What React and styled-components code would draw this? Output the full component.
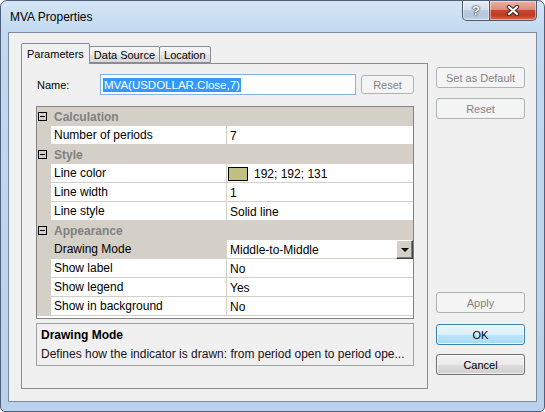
import React from 'react'
import styled, { createGlobalStyle } from 'styled-components'

const GlobalStyle = createGlobalStyle`
    html, body {
        margin: 0;
        padding: 0;
        background: #ffffff;
    }
    body {
        font-family: "Liberation Sans", Arial, sans-serif;
        color: #000;
    }
`;

const Window = styled.div`
    width: 545px;
    height: 412px;
    box-sizing: border-box;
    border: 1px solid #50607a;
    border-radius: 7px 7px 5px 5px;
    background: linear-gradient(180deg, #d4e5f6 0%, #c2d9f0 32px, #b9d1ea 100%);
    display: flex;
    flex-direction: column;
    overflow: hidden;
`;

const TitleBar = styled.div`
    height: 31px;
    flex-shrink: 0;
    display: flex;
    justify-content: space-between;
    align-items: flex-start;
    padding: 0 7px 0 9px;

    h1 {
        margin: 0;
        padding-top: 9px;
        font-size: 12px;
        line-height: 15px;
        font-weight: normal;
        color: #000;
    }
`;

const CaptionButtons = styled.div`
    display: flex;
    height: 20px;
`;

const CaptionButton = styled.div`
    box-sizing: border-box;
    width: ${p => p.$close ? 47 : 28}px;
    height: 20px;
    display: flex;
    align-items: center;
    justify-content: center;
    border: 1px solid #4c5b70;
    border-top: none;
    border-left: ${p => p.$close ? 'none' : '1px solid #4c5b70'};
    border-radius: ${p => p.$close ? '0 0 5px 0' : '0 0 0 5px'};
    background: ${p => p.$close
        ? 'linear-gradient(180deg, #eab2a4 0%, #dc8c7a 45%, #c8452c 50%, #c23a22 75%, #dc6a4c 100%)'
        : 'linear-gradient(180deg, #e6edf5 0%, #d3dfec 45%, #bccddf 50%, #b4c6da 80%, #c8d8ea 100%)'};
    box-shadow: inset 0 0 0 1px rgba(255, 255, 255, 0.45);
    color: #fff;
    font-weight: bold;
    font-size: 13px;
    text-shadow: 0 0 1px #2f3a48, 0 0 1px #2f3a48, 0 0 2px #2f3a48;
`;

const Client = styled.div`
    flex: 1;
    margin: 0 7px 9px 7px;
    border: 1px solid #7b8b9e;
    background: #f0f0f0;
    display: flex;
    padding: 10px 11px 12px 12px;
`;

const LeftPane = styled.div`
    width: 407px;
    display: flex;
    flex-direction: column;
`;

const TabStrip = styled.div`
    height: 20px;
    display: flex;
    align-items: flex-end;
    position: relative;
    z-index: 1;
`;

const Tab = styled.div`
    box-sizing: border-box;
    height: ${p => p.$active ? 21 : 17}px;
    margin-bottom: ${p => p.$active ? -1 : 0}px;
    margin-left: ${p => p.$first ? 0 : -1}px;
    padding: 0 ${p => p.$active ? 5 : 4}px;
    border: 1px solid #898c95;
    border-bottom: ${p => p.$active ? 'none' : '1px solid #898c95'};
    border-radius: 2px 2px 0 0;
    background: ${p => p.$active
        ? '#f0f0f0'
        : 'linear-gradient(180deg, #f6f6f6 0%, #ececec 50%, #e2e2e2 51%, #dadada 100%)'};
    font-size: 11px;
    line-height: ${p => p.$active ? 20 : 16}px;
    white-space: nowrap;
    position: relative;
    z-index: ${p => p.$active ? 2 : 1};
`;

const Panel = styled.div`
    flex: 1;
    border: 1px solid #898c95;
    background: #f0f0f0;
    padding: 10px 13px 0 14px;
    display: flex;
    flex-direction: column;
`;

const NameRow = styled.div`
    height: 21px;
    display: flex;
    align-items: center;

    label {
        width: 64px;
        font-size: 11px;
        padding-left: 1px;
        box-sizing: border-box;
    }
`;

const NameInput = styled.div`
    box-sizing: border-box;
    width: 256px;
    height: 21px;
    border: 1px solid #7eb4ea;
    background: #fff;
    display: flex;
    align-items: center;
    padding-left: 2px;
    margin-right: 5px;

    span {
        background: #3399ff;
        color: #fff;
        font-size: 11.5px;
        line-height: 14px;
        padding: 0 1px;
    }
`;

const Button = styled.button`
    box-sizing: border-box;
    width: ${p => p.$width || 89}px;
    height: ${p => p.$height || 21}px;
    margin: 0;
    margin-top: ${p => p.$top || 0}px;
    padding: 0;
    font-family: "Liberation Sans", Arial, sans-serif;
    font-size: 11px;
    border-radius: 3px;
    border: 1px solid ${p => p.disabled ? '#adb2b5' : p.$default ? '#3c7fb1' : '#707070'};
    color: ${p => p.disabled ? '#838383' : '#000'};
    background: ${p => p.disabled
        ? '#f4f4f4'
        : p.$default
            ? 'linear-gradient(180deg, #eaf6fd 0%, #d9f0fc 50%, #bee6fd 51%, #a7d9f5 100%)'
            : 'linear-gradient(180deg, #f2f2f2 0%, #ebebeb 50%, #dddddd 51%, #cfcfcf 100%)'};
    box-shadow: ${p => p.disabled ? 'none' : 'inset 0 0 0 1px rgba(255, 255, 255, 0.7)'};
`;

const Grid = styled.div`
    box-sizing: border-box;
    width: 378px;
    height: 213px;
    margin-top: 11px;
    border: 1px solid #828282;
    background: #fff;
    overflow: hidden;
    font-size: 12px;
`;

const CategoryRow = styled.div`
    height: 19px;
    display: flex;
    align-items: center;
    background: #d4d0c8;

    strong {
        padding-left: 3px;
        color: #808080;
        font-weight: bold;
    }
`;

const ExpandCell = styled.div`
    width: 14px;
    height: 19px;
    display: flex;
    align-items: center;
    padding-left: 1px;
    box-sizing: border-box;
`;

const MinusBox = styled.span`
    box-sizing: border-box;
    width: 9px;
    height: 9px;
    border: 1px solid #000;
    position: relative;

    &::after {
        content: '';
        position: absolute;
        left: 1px;
        right: 1px;
        top: 3px;
        height: 1px;
        background: #000;
    }
`;

const PropRow = styled.div`
    height: 19px;
    display: flex;
`;

const Gutter = styled.div`
    width: 14px;
    background: #d4d0c8;
`;

const NameCell = styled.div`
    box-sizing: border-box;
    width: 176px;
    height: 19px;
    padding-left: 3px;
    line-height: 19px;
    border-right: 1px solid #d4d0c8;
    border-bottom: 1px solid #d4d0c8;
    background: ${p => p.$selected ? '#d4d0c8' : '#fff'};
    white-space: nowrap;
`;

const ValueCell = styled.div`
    box-sizing: border-box;
    flex: 1;
    height: 19px;
    padding-left: 3px;
    padding-top: 1px;
    border-bottom: 1px solid #d4d0c8;
    display: flex;
    align-items: center;
    white-space: nowrap;
`;

const Swatch = styled.span`
    box-sizing: border-box;
    width: 20px;
    height: 14px;
    margin: 0 6px 0 -2px;
    border: 1px solid #000;
    background: ${p => p.$color};
`;

const DropButton = styled.span`
    box-sizing: border-box;
    width: 17px;
    height: 19px;
    margin-left: auto;
    margin-top: -1px;
    align-self: flex-start;
    background: #d4d0c8;
    border: 1px solid;
    border-color: #ffffff #404040 #404040 #ffffff;
    box-shadow: inset -1px -1px 0 #808080;
    display: flex;
    align-items: center;
    justify-content: center;

    &::after {
        content: '';
        border-left: 4px solid transparent;
        border-right: 4px solid transparent;
        border-top: 4px solid #000;
        margin-top: 1px;
    }
`;

const Description = styled.div`
    box-sizing: border-box;
    height: 43px;
    margin-top: 4px;
    border: 1px solid #a0a0a0;
    padding: 3px 4px 0 4px;
    font-size: 12px;
    overflow: hidden;

    h3 {
        margin: 0;
        font-size: 12px;
        line-height: 16px;
        font-weight: bold;
    }
    p {
        margin: 3px 0 0 0;
        line-height: 16px;
        white-space: nowrap;
        color: #1a1020;
    }
`;

const SideButtons = styled.div`
    margin-left: 8px;
    width: 89px;
    display: flex;
    flex-direction: column;
    padding: 24px 0 14px 0;
`;

const Spacer = styled.div`
    flex: 1;
`;

const sections = [
    {
        title: 'Calculation',
        rows: [{ name: 'Number of periods', value: '7' }],
    },
    {
        title: 'Style',
        rows: [
            { name: 'Line color', value: '192; 192; 131', color: 'rgb(192, 192, 131)' },
            { name: 'Line width', value: '1' },
            { name: 'Line style', value: 'Solid line' },
        ],
    },
    {
        title: 'Appearance',
        rows: [
            { name: 'Drawing Mode', value: 'Middle-to-Middle', selected: true, dropdown: true },
            { name: 'Show label', value: 'No' },
            { name: 'Show legend', value: 'Yes' },
            { name: 'Show in background', value: 'No' },
        ],
    },
];

function CloseGlyph() {
    return (
        <svg width="14" height="11" viewBox="0 0 14 11">
            <path d="M3 2 L11 9 M11 2 L3 9" stroke="#3a2a28" strokeWidth="4.2" strokeLinecap="round" />
            <path d="M3 2 L11 9 M11 2 L3 9" stroke="#ffffff" strokeWidth="2.2" strokeLinecap="round" />
        </svg>
    );
}

export default function App() {
    return (
        <>
            <GlobalStyle />
            <Window>
                <TitleBar>
                    <h1>MVA Properties</h1>
                    <CaptionButtons>
                        <CaptionButton>?</CaptionButton>
                        <CaptionButton $close><CloseGlyph /></CaptionButton>
                    </CaptionButtons>
                </TitleBar>
                <Client>
                    <LeftPane>
                        <TabStrip>
                            <Tab $active $first>Parameters</Tab>
                            <Tab>Data Source</Tab>
                            <Tab>Location</Tab>
                        </TabStrip>
                        <Panel>
                            <NameRow>
                                <label>Name:</label>
                                <NameInput><span>MVA(USDOLLAR.Close,7)</span></NameInput>
                                <Button disabled $width={53} $height={19}>Reset</Button>
                            </NameRow>
                            <Grid>
                                {sections.map(section => (
                                    <React.Fragment key={section.title}>
                                        <CategoryRow>
                                            <ExpandCell><MinusBox /></ExpandCell>
                                            <strong>{section.title}</strong>
                                        </CategoryRow>
                                        {section.rows.map(row => (
                                            <PropRow key={row.name}>
                                                <Gutter />
                                                <NameCell $selected={row.selected}>{row.name}</NameCell>
                                                <ValueCell>
                                                    {row.color && <Swatch $color={row.color} />}
                                                    {row.value}
                                                    {row.dropdown && <DropButton />}
                                                </ValueCell>
                                            </PropRow>
                                        ))}
                                    </React.Fragment>
                                ))}
                            </Grid>
                            <Description>
                                <h3>Drawing Mode</h3>
                                <p>Defines how the indicator is drawn: from period open to period ope...</p>
                            </Description>
                        </Panel>
                    </LeftPane>
                    <SideButtons>
                        <Button disabled>Set as Default</Button>
                        <Button disabled $top={10}>Reset</Button>
                        <Spacer />
                        <Button disabled>Apply</Button>
                        <Button $default $top={11}>OK</Button>
                        <Button $top={9}>Cancel</Button>
                    </SideButtons>
                </Client>
            </Window>
        </>
    );
}
